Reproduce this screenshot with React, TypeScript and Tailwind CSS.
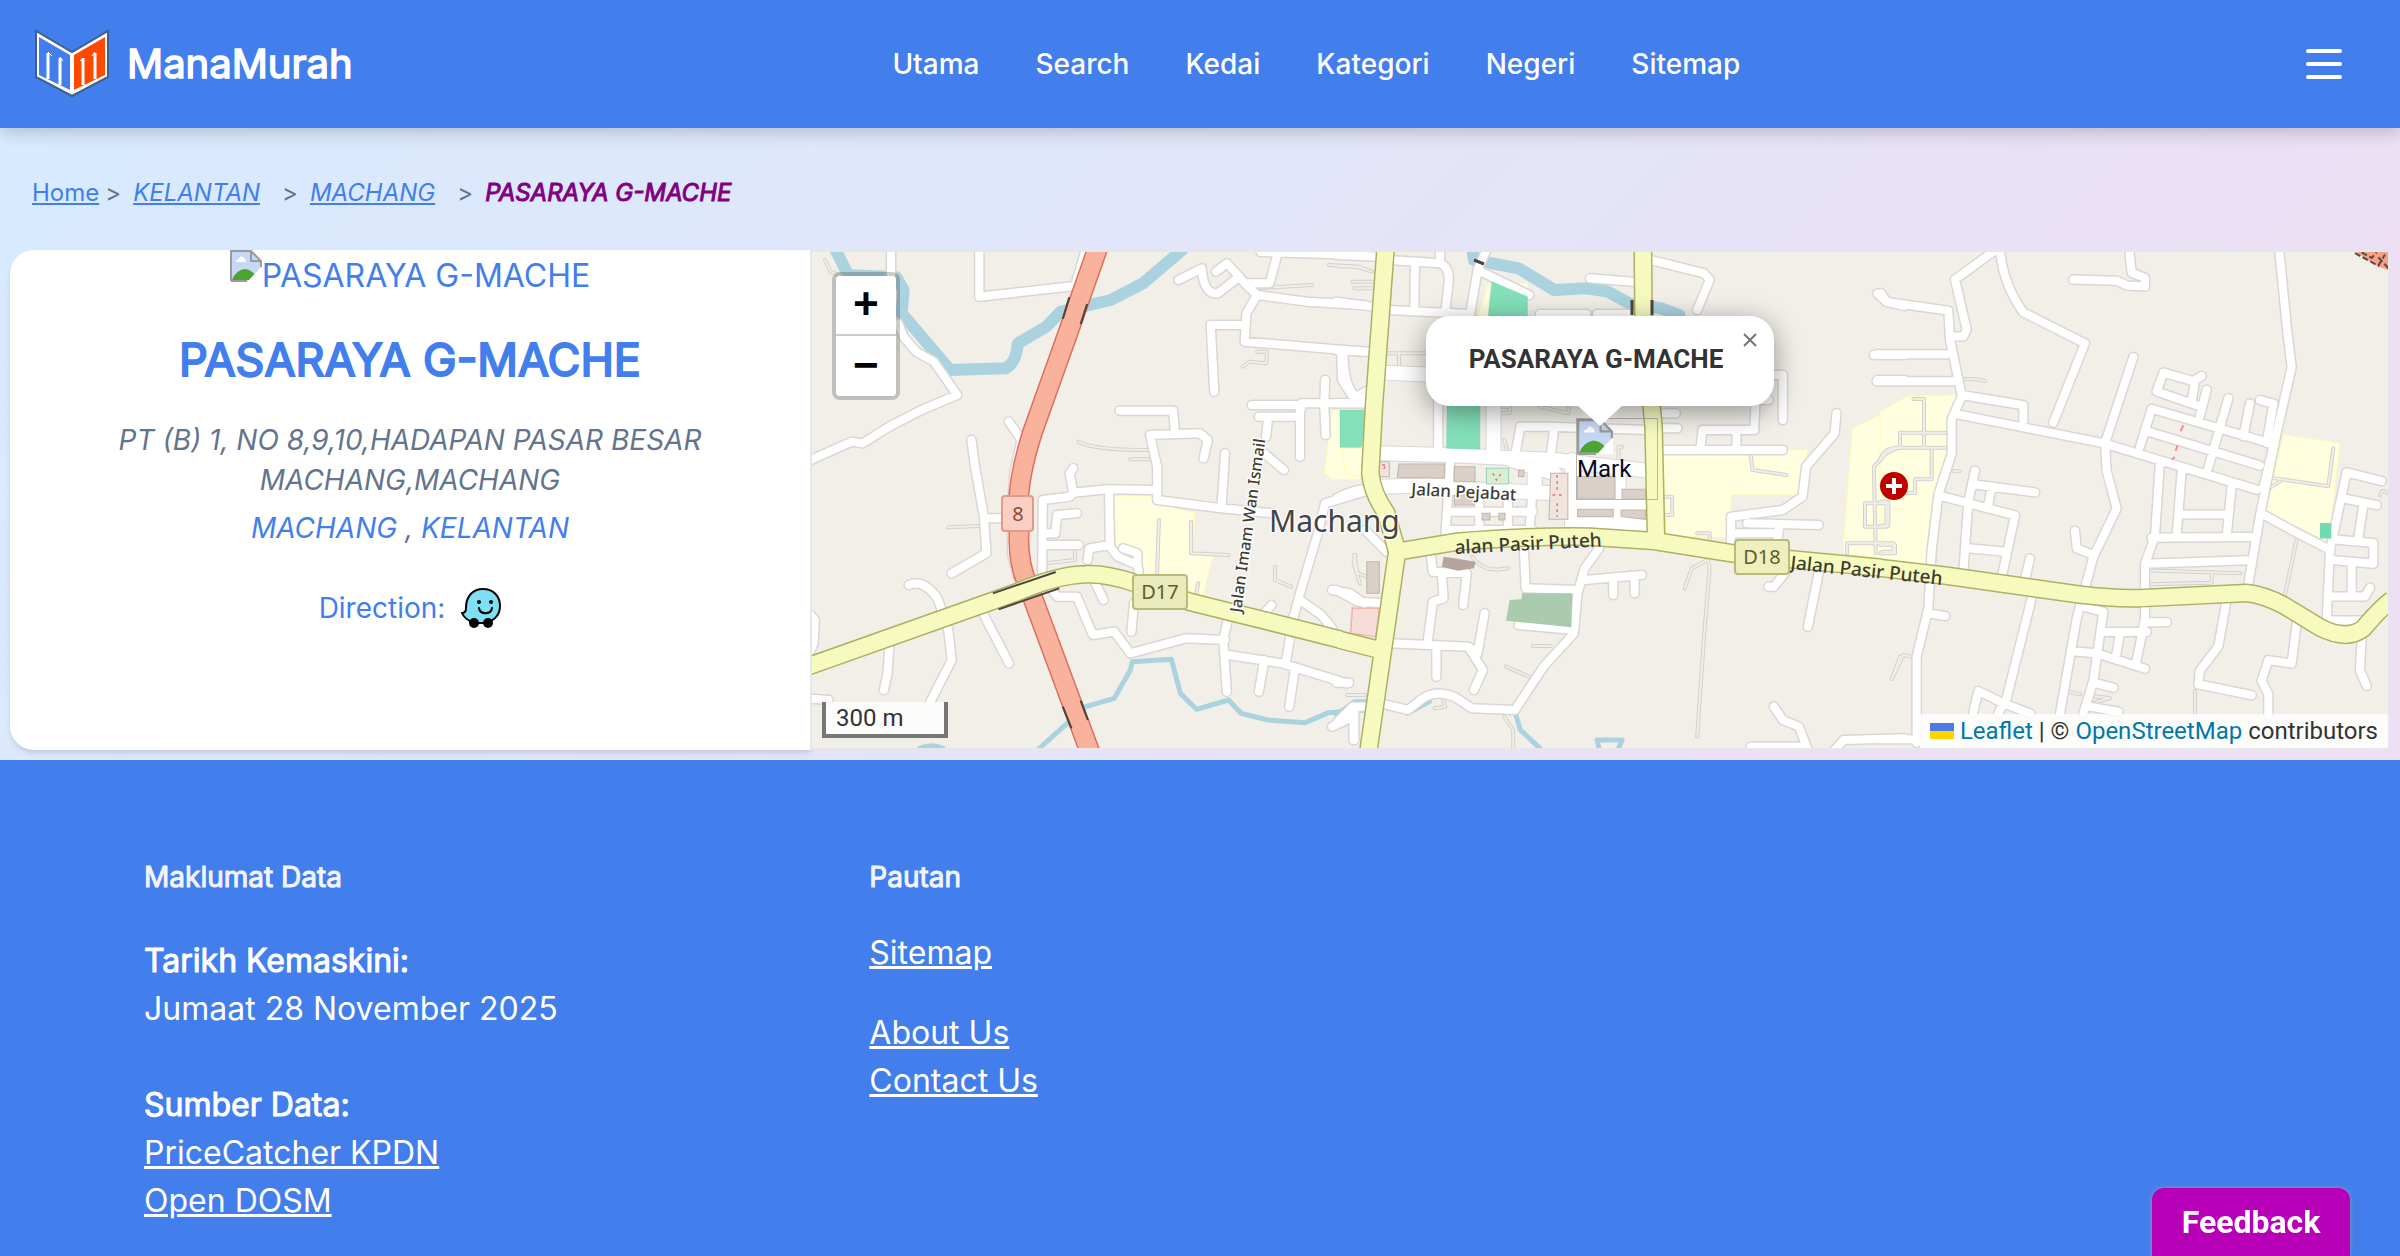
import React from "react";

const NAV = ["Utama", "Search", "Kedai", "Kategori", "Negeri", "Sitemap"];

type Tile = {
  transform: string;
  areas: string;
  streets: string;
  wide: string;
  tracks: string;
  river: string;
  stream: string;
  highway: string;
  main: string;
};

const TILES: Tile[] = [
  {
    transform: "translate(800 240) scale(0.35714 0.33333)",
    areas:
      "M878 768H990L1000 790L1105 820L1100 930L1155 950L1130 1065L960 1010L950 930L885 925ZM1490 510H1568V718H1490L1468 700Z",
    streets:
      "M255 30V110M275 250L290 290L325 335L375 365L440 465L340 510L250 560L175 610L145 605L20 665M502 30V170L770 138L800 30M480 600L490 680L515 830L522 940L425 1000M515 835H580M585 545L620 600L600 700L594 800L594 940L610 1010M30 1125L42 1140L38 1210L30 1230M305 1035Q345 1015 385 1075L400 1120L415 1170L425 1260L365 1385M250 1220L245 1300L235 1350M515 1125L585 1270M20 1375L80 1380M1060 120L1125 85Q1130 165 1170 160L1230 110L1195 70L1165 95M1325 30L1335 50L1315 130H1245L1230 110M1245 130L1280 165L1420 185L1580 195M1280 165L1250 220L1245 305L1580 335M1245 255H1150L1160 455M1290 36L1580 45M1515 335L1518 420L1545 465L1580 475M1265 495H1400V650M1400 520L1405 490H1580M1285 530H1400M1470 420L1468 500L1472 585M1310 540L1305 590M1300 640L1355 690M895 512H1045L1050 580M1130 655L1142 600L1120 580L980 585L1000 680V780L1180 805L1320 820M1190 640L1180 805M1000 750L860 748L765 758L755 700L765 685M765 758L755 770L680 780L678 1010L720 1070L775 1070L820 1185L880 1175L925 1240L1080 1195L1190 1200M865 750L868 920L890 950L945 975L950 1010M775 820L720 825L715 880H690M680 915H780M805 960L810 925L868 915M905 925L945 940V970M825 1025L850 1080M935 1090L928 1175M1200 1130L1185 1200L1195 1355M1200 1245L1350 1270L1530 1330M1300 1260L1285 1355M1385 1290L1370 1400M1360 1270L1380 1140L1400 1060L1450 880L1470 790L1580 755M1400 1080L1460 1125L1490 1165M1300 1120L1320 1095M1490 1050L1540 1060L1580 1090M1490 1460L1550 1430V1500",
    wide: "",
    tracks:
      "M780 605Q820 630 975 630M925 658H985M415 862L500 858M1005 840L1000 1000M1095 845L1095 940L1200 945M1240 380L1260 365L1305 370L1308 335H1280M1275 145L1435 135M1480 75L1568 80M1330 980L1330 1020L1375 1040M690 970L770 960V920M70 60L85 95L120 110M1110 1060L1115 1030M1555 945L1550 970L1568 1030",
    river:
      "M95 20L135 105L270 112L290 150L285 220L420 390L575 385Q605 370 610 310L690 260L730 215L870 180L960 130L1070 30",
    stream:
      "M665 1530L800 1400L880 1375L925 1290L930 1265L1040 1258L1065 1360L1110 1408L1200 1380L1235 1420L1310 1440L1415 1448L1480 1418L1580 1410M335 1525Q370 1510 400 1525",
    highway: "M835 20L750 280L650 580Q600 750 615 850Q605 960 640 1040L820 1560",
    main: "M20 1280L600 1060Q720 1005 800 1003Q860 1000 940 1030L1090 1085L1515 1199",
  },
  {
    transform: "translate(1340 240) scale(0.35714 0.33333)",
    areas:
      "M0 560L15 700L70 710V600ZM415 130H525V230H385ZM905 645H1145V630H1310L1300 680L1290 765H1095V895L915 885ZM1568 495L1435 565L1410 905V940L1568 965Z",
    streets:
      "M-10 45L110 50M135 60L280 70Q305 80 305 120L295 215M210 65L208 210M135 210L365 222L385 90L410 30M385 90L530 165M280 30V65M-10 185L90 200M-10 330L85 335M10 340Q10 440 45 470L80 450M-10 490H80M700 115L820 125M870 60L1020 100L1035 120L1000 210M560 222H690M720 222H820M275 405V640M490 650L505 560L590 560L860 570M600 560L590 650M890 630H1240M890 520H940M890 565H945M1010 620L1015 570H1160L1165 440M1110 570V625M1240 540V405H1200M1140 480H1200M1390 520L1385 580L1305 680L1295 770L1240 810L1095 830V910M1140 850L1340 855M1095 880H1220M1230 860L1225 900M1340 1000L1310 1160M1245 1000L1215 1040H1200M725 925L685 985L665 1060L655 1180L570 1280L490 1410L370 1405L320 1370Q260 1345 220 1385L190 1410L115 1390M515 930L520 1045L665 1050M685 1020L845 1005M765 1020V1065M825 1010V1060M500 1155L655 1170M255 950L260 995L355 1000L345 1095M285 1000L290 1075L260 1085L245 1210M140 1210L360 1220L385 1240L405 1120M365 1230L400 1290L375 1350M270 1215V1310M-10 1050L50 1085L120 1090M-10 1328H25M-10 1450L35 1400H75M40 1400V1500M-10 775Q50 740 95 750M70 870L130 935M1515 160L1530 185L1580 198M1495 345H1580M1505 420H1580M1215 1400L1240 1440L1285 1460L1310 1530M1385 1530L1410 1500L1580 1495M1150 1520H1290M310 640L295 890M390 740V880M470 740V880M310 870H540M310 815H540M540 740L530 880",
    wide: "M130 398L275 405M105 640L300 645L600 660L860 692M105 740L300 735M430 490V650M320 745L600 760M480 660L600 700M545 660V740M650 660V870M780 690V870M650 795H860M650 852H860",
    tracks:
      "M0 80Q40 75 90 95M35 125H95M40 145H90M130 340H240M165 380V340M440 500H475V520H445M560 500L640 520V500M460 600L470 640M780 660V620H790M900 770H930V825H905M1150 645L1155 690L1250 705M965 1045L985 985L1030 960L1035 985L1020 1180L1000 1490M370 950Q400 1000 470 985M40 945L50 1000L75 1010M40 1130L70 1150L100 1125M70 1150V1180M465 1280L530 1310M540 1218H590M460 1430L485 1470V1525M265 1405L295 1400L290 1380M1000 880H1035V900M1500 940L1495 680L1530 640L1568 620M1470 860H1530V790H1470ZM1420 940V910H1550V935H1520M1548 1310L1568 1250M20 1365H70",
    river:
      "M370 20L375 60L500 85L600 150L690 145L750 155L810 190L900 205L950 225",
    stream:
      "M490 1415L505 1470L570 1535M-10 1425L40 1385H80M190 1420L250 1385M725 1525L720 1500H790L780 1525",
    highway: "",
    main: "M128 20L95 500L85 700Q90 760 130 820L160 935L76 1560M-2 1199L120 1232M160 935L330 905Q500 888 700 890L880 903L1110 942L1515 983M848 20L850 250L878 560L885 900",
  },
  {
    transform: "translate(1880 240) scale(0.33333 0.34436)",
    areas:
      "M0 500L80 455L230 450L235 470L215 600L185 740L155 955L0 935ZM1210 565L1380 590L1345 885L1155 800Z",
    streets:
      "M-8 155L20 180L205 205L210 290L245 450L430 480V525M345 30L225 115L260 260L250 280H215M-10 332H205M-10 410H220M360 30Q370 130 430 210L615 300L520 530M580 115L710 118L740 132L795 135L795 110L755 95L748 30M1198 30L1220 250L1235 370L1190 560L1140 800L1105 1000M1190 560L1150 720M245 455L215 520L215 620L175 740L155 900L145 1070L110 1210V1460M225 505L670 590L1130 725M760 340L675 590L680 670L710 780L640 920L615 1010L590 1100L540 1375M190 745L405 800L365 980M285 670L265 760L250 965M285 710L465 733M335 715L325 770M265 895L375 905M450 925L435 985M455 1040L380 1330M585 845L590 895L640 915M780 600L815 490L1170 590M800 555L1140 655M950 480L830 440L850 385L940 410L965 395M945 410L935 470M980 435L960 510M1045 460L985 660M1110 475L1090 570M1140 465L1180 475L1160 590M840 640L825 860L795 940V1100L770 1220M905 670L890 860M1055 715L1040 860M900 797H1045M815 865L1120 862M800 940L1100 930M150 1085L195 1092M610 1065L670 1080L640 1280L610 1375M670 1138H800M585 1195L650 1200L795 1245M720 1140L710 1200M800 1110H860M640 1285L700 1300M630 1355L715 1370M280 1370L295 1310L370 1345L450 1375M370 1345L355 1375M1040 1045L1015 1180L960 1250L955 1290L1115 1322M1250 1115L1235 1230L1165 1220L1145 1280L1165 1320V1380M1445 1155L1440 1250L1460 1295M1155 800L1250 850L1350 900L1340 1105H1450M1350 900L1400 675L1505 700M1390 750L1490 770M1450 770L1435 865M1365 870L1480 880V940L1365 930M1415 945V1035M1350 1035H1455L1470 1010M-10 1450H110",
    wide: "",
    tracks:
      "M100 462H132V600M0 640Q10 605 50 603H200M60 600V560H195M155 610V695H105V735H85M245 405Q280 400 315 410M0 760H25V830H0M0 885H45V910H0M220 670L240 672M1170 690L1345 715L1360 605M1170 720L1200 700M1250 870L1215 1030M35 1275L70 1205L95 1210M560 1310L600 1320M640 1325L690 1330L640 1345M945 1310L945 1375M810 960L1080 968M810 1000L995 995V970M1500 740Q1510 720 1520 735M1185 500L1165 590",
    river: "",
    stream: "",
    highway: "",
    main: "M0 952L200 975L600 1030Q700 1042 780 1040L1100 1025Q1150 1030 1210 1060L1320 1125Q1400 1165 1450 1128Q1500 1070 1535 1045",
  },
];

type StrokeKey = "streets" | "wide" | "tracks" | "river" | "stream" | "highway" | "main";

function Strokes({ of, color, width, butt }: { of: StrokeKey; color: string; width: number; butt?: boolean }) {
  return (
    <>
      {TILES.map((t, i) => (
        <g key={i} transform={t.transform}>
          <path
            d={t[of]}
            fill="none"
            stroke={color}
            strokeWidth={width}
            strokeLinecap={butt ? "butt" : "round"}
            strokeLinejoin="round"
            vectorEffect="non-scaling-stroke"
          />
        </g>
      ))}
    </>
  );
}

function MapDrawing() {
  return (
    <svg
      viewBox="812 252 1576 496"
      preserveAspectRatio="xMidYMid slice"
      className="block h-full w-full"
      role="img"
      aria-label="Map of Machang"
    >
      <rect x="0" y="0" width="3000" height="1000" fill="#f2efe9" />
      {TILES.map((t, i) => (
        <g key={i} transform={t.transform}>
          <path d={t.areas} fill="#ffffe0" stroke="#fcfcb4" strokeWidth="1" vectorEffect="non-scaling-stroke" />
        </g>
      ))}
      <g transform={TILES[0].transform}>
        <path d="M1522 510H1568V622H1522Z" fill="#84e0bb" />
        <path d="M1545 1100H1568V1190L1540 1180Z" fill="#f5dcd6" stroke="#f0aba4" />
      </g>
      <Strokes of="river" color="#aad3df" width={12} />
      <Strokes of="stream" color="#aad3df" width={5} />
      <Strokes of="tracks" color="#d3d0cd" width={4} />
      <Strokes of="tracks" color="#f1eeea" width={2} />
      <Strokes of="streets" color="#dad6d4" width={11} />
      <Strokes of="wide" color="#dad6d4" width={16} />
      <Strokes of="streets" color="#ffffff" width={8} />
      <Strokes of="wide" color="#ffffff" width={14} />
      <g transform={TILES[1].transform}>
        <path
          d="M425 125L525 170V230H415ZM300 490H392V628L298 625ZM0 510H75L60 622H0Z"
          fill="#84e0bb"
          stroke="#6fcfaa"
        />
        <path d="M510 1060H650L648 1162L465 1142L475 1080L508 1078Z" fill="#aacbae" />
        <path d="M290 950L320 955L380 965L375 985L330 992L285 980Z" fill="#b5a59c" />
        <path
          d="M75 965H110V1060H75ZM665 710H770V775H665ZM790 748H855V778H790ZM165 672H292V715L160 712ZM665 808H765V830H665ZM787 810H855V838L787 830ZM320 680H378V725H320ZM320 765H375V795H320ZM398 820H420V840H398ZM445 820H462V840H445ZM500 690H515V710H500Z"
          fill="#d9d0c9"
          stroke="#c3b6ab"
          strokeWidth="3"
        />
        <path d="M410 685H472V732H410Z" fill="#d6eed2" stroke="#9cd3b6" strokeWidth="3" />
        <path d="M590 700H638V838H585ZM107 665H138V710H107Z" fill="#f0e4de" stroke="#c3b6ab" strokeWidth="3" />
        <path d="M35 1105H110L100 1190L30 1180Z" fill="#f5dcd6" stroke="#f0aba4" strokeWidth="3" />
        <path
          d="M608 705V755M608 790V830M595 765H628M428 700L438 720L450 702M118 675H130L120 690"
          fill="none"
          stroke="#f0676c"
          strokeWidth="4"
          strokeDasharray="8 10"
        />
      </g>
      <g transform={TILES[2].transform}>
        <path d="M1320 822H1354V867H1320Z" fill="#6fd9b4" />
        <path d="M910 538L902 555M893 596L887 612M884 630L876 638" fill="none" stroke="#f38b8b" strokeWidth="6" />
        <path d="M1420 30H1530V90L1490 75Z" fill="#f9a08a" />
        <path
          d="M1425 38L1495 75L1515 42M1445 36L1475 52L1490 36M1495 50L1528 85"
          fill="none"
          stroke="#5c4a45"
          strokeWidth="6"
          strokeDasharray="18 8"
        />
      </g>
      <Strokes of="highway" color="#dd6f5c" width={21} butt />
      <Strokes of="highway" color="#f9b29c" width={18} butt />
      <Strokes of="main" color="#adb163" width={19} butt />
      <Strokes of="main" color="#f7fabf" width={16} butt />
      <g transform={TILES[0].transform} fill="none" stroke="#4d4540" strokeWidth="6">
        <path d="M754 172L736 236M804 192L786 252M540 1060L716 996M556 1108L726 1045M736 1400L760 1465M786 1382L806 1440" />
      </g>
      <path d="M1632 300V315M1652 300V315M1474 260L1484 264" stroke="#4d4540" strokeWidth="3" />

      <g fontFamily="Noto Sans, sans-serif" fontWeight="500" fill="#3d3d33" stroke="#ffffff" strokeOpacity="0.8" strokeWidth="3" paintOrder="stroke">
        <text x="1269" y="532" fontSize="30" fontWeight="400" fill="#444444">Machang</text>
        <text transform="translate(1411 495) rotate(3)" fontSize="17">Jalan Pejabat</text>
        <text transform="translate(1241 613) rotate(-82)" fontSize="16">Jalan Imam Wan Ismail</text>
        <g strokeOpacity="0">
          <text transform="translate(1455 554) rotate(-3)" fontSize="19">alan Pasir Puteh</text>
          <text transform="translate(1790 569) rotate(6)" fontSize="19">Jalan Pasir Puteh</text>
        </g>
      </g>
      <g fontFamily="Noto Sans, sans-serif" fontSize="20" textAnchor="middle">
        <rect x="1002" y="496" width="31" height="35" rx="3" fill="#f9cfc3" stroke="#e09a8a" strokeWidth="2" />
        <text x="1018" y="521" fill="#8a4a3c">8</text>
        <rect x="1133" y="575" width="54" height="34" rx="3" fill="#e9ebbb" stroke="#b9bc79" strokeWidth="2" />
        <text x="1160" y="599" fill="#5c5f2b">D17</text>
        <rect x="1735" y="540" width="54" height="34" rx="3" fill="#eeefbd" stroke="#b9bc79" strokeWidth="2" />
        <text x="1762" y="564" fill="#5c5f2b">D18</text>
      </g>
      <circle cx="1894" cy="486" r="14" fill="#bf0000" />
      <path d="M1886 486H1902M1894 478V494" stroke="#ffffff" strokeWidth="4" />
    </svg>
  );
}

function BrokenImage({ className }: { className: string }) {
  return (
    <svg viewBox="0 0 32 32" className={className} aria-hidden="true">
      <path d="M1 1H21L31 11V31H1Z" fill="#c6d8f6" />
      <path d="M6 12Q6 9 9 9Q10 5 13 7Q16 9 16 12Z" fill="#ffffff" />
      <path d="M2 30Q6 20 15 19Q24 20 28 30Z" fill="#4ba52e" />
      <path d="M32 16L18 31H32Z" fill="#ffffff" />
      <path d="M1 31V1H21L31 11V17M21 1V11H31M1 31H17" fill="none" stroke="#9b9b9b" strokeWidth="2" />
    </svg>
  );
}

function Logo() {
  return (
    <svg viewBox="0 0 74 68" className="h-[68px] w-[74px]" aria-hidden="true">
      <path d="M1 1L37 22L73 1V47L37 66L1 47Z" fill="#ffffff" stroke="#3f5f8f" strokeWidth="2" />
      <path d="M4 7L35 25V60L4 45Z" fill="#427eec" />
      <path d="M39 25L70 7V45L39 60Z" fill="#ff4800" />
      <path d="M13 23V49M25 28V55M48 28V55M60 23V49" stroke="#ffffff" strokeWidth="3" />
      <path d="M13 22L17 26M25 27L28 31M48 28L45 31M60 22L57 26" stroke="#ffffff" strokeWidth="1" />
    </svg>
  );
}

function Waze() {
  return (
    <svg viewBox="0 0 40 40" className="h-10 w-10" aria-hidden="true">
      <path
        d="M5 20C5 8 12 1 22 1C32 1 39 8 39 18C39 28 32 34 22 35H13C8 33 3 30 1 25C4 25 5 23 5 20Z"
        fill="#7de0f4"
        stroke="#000000"
        strokeWidth="2"
        strokeLinejoin="round"
      />
      <circle cx="18" cy="14" r="2" />
      <circle cx="30" cy="14" r="2" />
      <path d="M18 20C19 27 30 27 31 20" fill="none" stroke="#000000" strokeWidth="2" strokeLinecap="round" />
      <circle cx="13" cy="35" r="5" />
      <circle cx="27" cy="35" r="5" />
    </svg>
  );
}

function StoreMap() {
  return (
    <section className="relative h-full min-w-0 overflow-hidden border-y-2 border-r-2 border-gray-200 font-['Roboto',sans-serif] text-[24px]">
      <MapDrawing />

      <div className="absolute left-5 top-5 flex flex-col rounded-lg border-4 border-black/20 bg-clip-padding font-['Liberation_Mono',monospace] text-[44px] font-bold text-black">
        <button type="button" aria-label="Zoom in" className="flex h-[60px] w-[60px] items-center justify-center rounded-t border-b-2 border-[#cccccc] bg-white pt-1">
          +
        </button>
        <button type="button" aria-label="Zoom out" className="flex h-[60px] w-[60px] items-center justify-center rounded-b bg-white pt-1">
          −
        </button>
      </div>

      <div className="absolute bottom-[10px] left-[10px] h-9 w-[126px] border-x-4 border-b-4 border-[#777777] bg-white/80 pl-[10px] leading-8 text-[#333333]">
        300 m
      </div>

      <div className="absolute bottom-0 right-0 flex h-[34px] items-center gap-[6px] bg-white/80 px-[10px] text-[#333333]">
        <span className="flex h-4 w-6 flex-col">
          <span className="h-2 bg-[#4c7be1]" />
          <span className="h-2 bg-[#ffd500]" />
        </span>
        <span>
          <a href="#leaflet" className="text-[#0078a8]">Leaflet</a> | ©{" "}
          <a href="#osm" className="text-[#0078a8]">OpenStreetMap</a> contributors
        </span>
      </div>

      <div className="absolute left-1/2 top-[166px] ml-[-24px] h-[82px] w-[82px] border border-[#b5b5b5]">
        <BrokenImage className="h-9 w-9" />
        <span className="block leading-7 text-[#0a0a1e]">Mark</span>
      </div>

      <div className="absolute left-1/2 top-16 w-[348px] -translate-x-1/2">
        <div className="flex h-[90px] items-center justify-center rounded-3xl bg-white pb-1 pr-2 text-[26px] font-bold text-[#333333] shadow-[0_6px_28px_rgba(0,0,0,0.4)]">
          <span>PASARAYA G-MACHE</span>
        </div>
        <svg viewBox="0 0 44 20" className="mx-auto h-5 w-11" aria-hidden="true">
          <path d="M0 0H44L22 20Z" fill="#ffffff" />
        </svg>
        <button type="button" aria-label="Close popup" className="absolute right-2 top-2 flex h-8 w-8 items-center justify-center text-[#757575]">
          <svg viewBox="0 0 14 14" className="h-[14px] w-[14px]" aria-hidden="true">
            <path d="M1 1L13 13M13 1L1 13" stroke="currentColor" strokeWidth="2" />
          </svg>
        </button>
      </div>
    </section>
  );
}

const FAUX_BOLD = "font-normal [-webkit-text-stroke:1px_currentColor]";

export default function App() {
  return (
    <div className="flex min-h-screen flex-col bg-[linear-gradient(135deg,#d6ebff,#e1e6fa_35%,#ecdff4_72%)] font-['Inter',sans-serif] text-[32px] leading-[48px] text-[#427eec]">
      <header className="relative z-10 flex h-32 items-center justify-between bg-[#427eec] pl-[35px] pr-8 text-white shadow-[0_4px_16px_rgba(0,0,0,0.2)]">
        <a href="#home" className="flex items-center gap-[18px]">
          <Logo />
          <span className="text-[40px] font-normal [-webkit-text-stroke:1.5px_currentColor]">ManaMurah</span>
        </a>
        <nav className="flex gap-14 text-[28px] font-medium">
          {NAV.map((n) => (
            <a key={n} href="#nav">{n}</a>
          ))}
        </nav>
        <button type="button" aria-label="Menu" className="px-6">
          <svg viewBox="0 0 40 32" className="h-8 w-10" fill="none" stroke="currentColor" strokeWidth="4" strokeLinecap="round" aria-hidden="true">
            <path d="M4 3H36M4 16H36M4 29H36" />
          </svg>
        </button>
      </header>

      <nav aria-label="Breadcrumb" className="flex h-[122px] items-center px-8 pt-2 text-[24px] text-slate-500">
        <a href="#home" className="text-[#427eec] underline">Home</a>
        <span className="mx-[6px]">&gt;</span>
        <a href="#kelantan" className="ml-[6px] italic text-[#427eec] underline">KELANTAN</a>
        <span className="ml-[22px] mr-3">&gt;</span>
        <a href="#machang" className="italic text-[#427eec] underline">MACHANG</a>
        <span className="ml-[22px] mr-3">&gt;</span>
        <span className={`italic text-[#800080] ${FAUX_BOLD}`}>PASARAYA G-MACHE</span>
      </nav>

      <main className="grid h-[510px] grid-cols-[802fr_1578fr] px-[10px] pb-[10px]">
        <section className="flex h-[500px] flex-col items-center rounded-l-3xl border-r-2 border-gray-200 bg-white text-center shadow-md">
          <div className="flex h-[50px] items-start">
            <BrokenImage className="h-8 w-8" />
            <span className="pt-[2px]">PASARAYA G-MACHE</span>
          </div>
          <h1 className="mt-8 text-[45px] font-normal leading-[56px] [-webkit-text-stroke:2px_currentColor]">PASARAYA G-MACHE</h1>
          <address className="mt-8 w-[640px] text-[28px] leading-10 text-slate-500">
            PT (B) 1, NO 8,9,10,HADAPAN PASAR BESAR MACHANG,MACHANG
            <span className="mt-2 block">
              <a href="#machang" className="text-[#427eec]">MACHANG</a> ,{" "}
              <a href="#kelantan" className="text-[#427eec]">KELANTAN</a>
            </span>
          </address>
          <a href="#waze" className="mt-10 flex items-center gap-4 text-[28px] leading-10">
            Direction: <Waze />
          </a>
        </section>
        <StoreMap />
      </main>

      <footer className="grid flex-1 grid-cols-3 gap-16 bg-[#427eec] px-36 pt-[97px] text-white">
        <section>
          <h2 className={`text-[28px] leading-10 text-slate-100 ${FAUX_BOLD}`}>Maklumat Data</h2>
          <p className={`mt-10 ${FAUX_BOLD}`}>Tarikh Kemaskini:</p>
          <p>Jumaat 28 November 2025</p>
          <p className={`mt-12 ${FAUX_BOLD}`}>Sumber Data:</p>
          <p><a href="#pricecatcher" className="underline">PriceCatcher KPDN</a></p>
          <p><a href="#dosm" className="underline">Open DOSM</a></p>
        </section>
        <section>
          <h2 className={`text-[28px] leading-10 text-slate-100 ${FAUX_BOLD}`}>Pautan</h2>
          <p className="mt-8"><a href="#sitemap" className="underline">Sitemap</a></p>
          <p className="mt-8"><a href="#about" className="underline">About Us</a></p>
          <p><a href="#contact" className="underline">Contact Us</a></p>
        </section>
      </footer>

      <button
        type="button"
        className="fixed bottom-0 right-[50px] z-20 h-[68px] w-[198px] rounded-t-xl bg-[#b800b8] font-['Roboto',sans-serif] text-[32px] font-bold text-white shadow-[0_0_4px_rgba(160,160,160,0.9)]"
      >
        Feedback
      </button>
    </div>
  );
}
